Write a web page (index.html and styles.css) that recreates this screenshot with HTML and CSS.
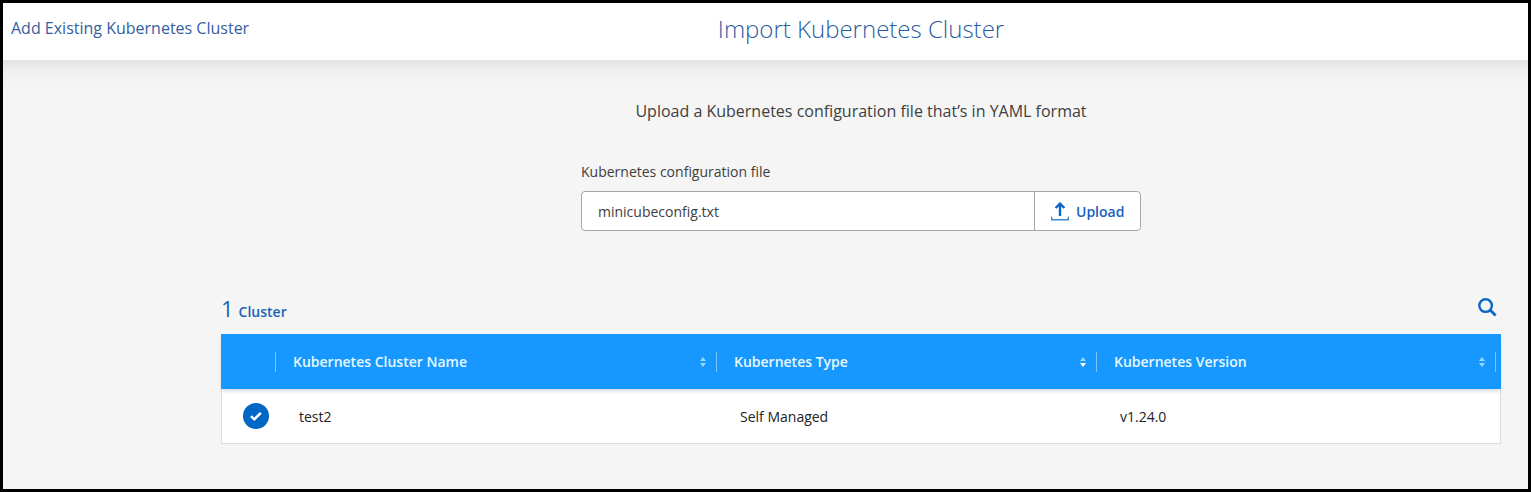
FILE: index.html
```html
<!DOCTYPE html>
<html lang="en">
<head>
<meta charset="utf-8">
<title>Import Kubernetes Cluster</title>
<link rel="stylesheet" href="styles.css">
</head>
<body>
<div class="frame">
  <header class="topbar">
    <a class="crumb">Add Existing Kubernetes Cluster</a>
    <h1 class="title">Import Kubernetes Cluster</h1>
  </header>
  <main class="content">
    <p class="intro">Upload a Kubernetes configuration file that’s in YAML format</p>
    <section class="upload">
      <label class="label">Kubernetes configuration file</label>
      <div class="field">
        <div class="filename">minicubeconfig.txt</div>
        <button class="button" type="button">
          <svg width="18" height="19" viewBox="0 0 18 19" fill="none" stroke="#0a66c8"><path d="M9 14V2M4.6 6 9 1.6 13.4 6" stroke-width="2.4"/><path d="M.7 14.8v2.9h16.6v-2.9" stroke-width="1.4" stroke="#3f87d2"/></svg>
          <span>Upload</span>
        </button>
      </div>
    </section>
    <div class="summary">
      <div class="count"><span class="number">1</span><span class="noun">Cluster</span></div>
      <svg class="search" width="19" height="19" viewBox="0 0 19 19" fill="none" stroke="#0a66c2"><circle cx="7.6" cy="7.6" r="6.3" stroke-width="2.4"/><path d="m12.1 12.1 5.5 5.5" stroke-width="2.8"/></svg>
    </div>
    <div class="table">
      <div class="row head">
        <div class="cell"></div>
        <div class="cell">Kubernetes Cluster Name<svg class="sort" width="6" height="10" viewBox="0 0 6 10"><path d="M0 4 3 0l3 4zM0 6h6L3 10z"/></svg></div>
        <div class="cell">Kubernetes Type<svg class="sort" width="6" height="10" viewBox="0 0 6 10"><path d="M0 4 3 0l3 4z"/><path class="active" d="M0 6h6L3 10z"/></svg></div>
        <div class="cell">Kubernetes Version<svg class="sort" width="6" height="10" viewBox="0 0 6 10"><path d="M0 4 3 0l3 4zM0 6h6L3 10z"/></svg></div>
      </div>
      <div class="row body">
        <div class="check"><svg width="26" height="26" viewBox="0 0 26 26"><circle cx="13" cy="13" r="13" fill="#0067c5"/><path d="m8 13.1 3.3 3.2 6.6-6.4" fill="none" stroke="#fff" stroke-width="2.5"/></svg></div>
        <div>test2</div>
        <div>Self Managed</div>
        <div>v1.24.0</div>
      </div>
    </div>
  </main>
</div>
</body>
</html>
```
FILE: styles.css
```css
* { box-sizing: border-box; }
body { margin: 0; font-family: "Open Sans", "Noto Sans", sans-serif; font-size: 14px; color: #404040; }
.frame { height: 492px; border: 3px solid #000; background: linear-gradient(#e4e4e4 57px, #e6e6e6 61px, #efefef 67px, #f2f2f2 74px, #f5f5f5 84px); overflow: hidden; }
.topbar { display: grid; grid-template-columns: 218px 1280px; height: 57px; padding-right: 27px; background: #fff; }
.crumb { padding: 13px 0 0 8px; font-size: 16px; line-height: 24px; white-space: nowrap; color: #3560a0; }
.title { margin: 0; padding-top: 9px; font-size: 24px; line-height: 33px; font-weight: 300; text-align: center; color: #2a5c9f; }
.content { width: 1280px; margin-left: 218px; }
.intro { margin: 0; padding-top: 39px; font-size: 16px; line-height: 24px; text-align: center; }
.upload { width: 560px; margin: 39px auto 0; }
.label { display: block; height: 29px; line-height: 20px; }
.field { display: flex; height: 40px; border: 1px solid #a6a6a6; border-radius: 4px; background: #fff; }
.filename { flex: 1; padding-left: 16px; line-height: 39px; }
.button { display: flex; align-items: center; gap: 7px; width: 106px; padding: 0 0 0 16px; border: 0; border-left: 1px solid #a6a6a6; background: none; font: 600 14px "Open Sans", sans-serif; color: #1560bd; }
.summary { display: flex; justify-content: space-between; height: 103px; padding: 67px 4px 0 0; }
.count { display: flex; align-items: baseline; gap: 5px; height: 30px; margin-top: -2px; line-height: 24px; color: #1b63b5; }
.number { font-size: 22px; font-weight: 400; }
.noun { font-weight: 600; }
.row { display: grid; grid-template-columns: 55px 441px 380px 404px; align-items: center; }
.head { position: relative; height: 55px; background: #1698ff; box-shadow: 0 3px 4px -1px rgba(0,60,130,.2); color: #e6f8ff; font-weight: 600; }
.cell { display: flex; align-items: center; justify-content: space-between; height: 20px; padding: 0 10px 0 17px; border-right: 1px solid #79c9ff; }
.cell:last-child { margin-right: 5px; }
.sort { fill: #9ad8ff; }
.active { fill: #fff; }
.body { height: 55px; border: 1px solid #dcdcdc; border-top: 0; background: #fff; color: #222; }
.body > div { padding-left: 22px; }
.body .check { padding-left: 21px; line-height: 0; }
```
